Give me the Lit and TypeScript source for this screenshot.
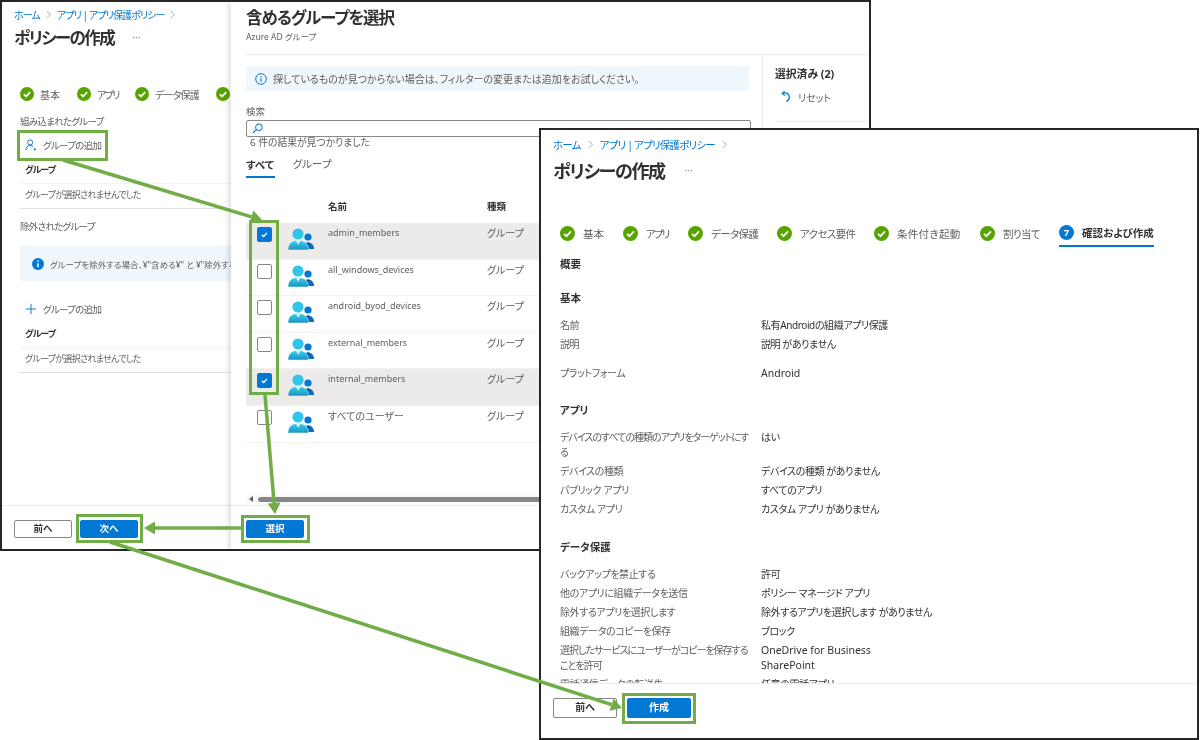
import { LitElement, css, html, svg } from 'lit';
import { customElement } from 'lit/decorators.js';

const chevron = html`<svg class="chev" viewBox="0 0 8 10"><path d="M2 1l4 4-4 4" fill="none" stroke="#a19f9d" stroke-width="1" /></svg>`;

const checkDot = html`<svg class="dot" viewBox="0 0 16 16">
  <circle cx="8" cy="8" r="8" fill="#57a300" />
  <path d="M4.3 8.3l2.6 2.5 4.8-5" fill="none" stroke="#fff" stroke-width="1.9" />
</svg>`;

const groupIcon = html`<svg class="group-icon" viewBox="0 0 26 22">
  <defs>
    <linearGradient id="gi" x1="0" y1="0" x2="0" y2="1">
      <stop offset="0" stop-color="#3ad0f2" />
      <stop offset="1" stop-color="#1a93bd" />
    </linearGradient>
  </defs>
  <circle cx="20" cy="9" r="3.6" fill="#0078d4" />
  <path d="M14 21c0-4 2.500-6.500 6-6.500s6 2.500 6 6.500z" fill="#0a6cc0" />
  <path d="M19 14.800h2.400l-1.200 3z" fill="#083f7a" />
  <circle cx="10" cy="6" r="5.600" fill="#32c5ea" />
  <path d="M0 22c0-6.500 3.500-9.500 10-9.500s10.500 3 10.500 9.500z" fill="url(#gi)" stroke="#fff" stroke-width=".5" />
  <path d="M8 12.800h4.400l-2.200 4z" fill="#e8f8fc" />
</svg>`;

const personIcon = html`<svg class="add-icon" viewBox="0 0 14 14">
  <circle cx="6" cy="4" r="3" fill="none" stroke="#0078d4" stroke-width="1.100" />
  <path d="M1 13c0-3.500 2-5.500 5-5.500 1.600 0 2.800.5 3.700 1.500" fill="none" stroke="#0078d4" stroke-width="1.100" />
  <circle cx="11.600" cy="12" r="1.300" fill="#0078d4" />
</svg>`;

const plusIcon = html`<svg class="add-icon" viewBox="0 0 14 14">
  <path d="M7 1v12M1 7h12" fill="none" stroke="#0078d4" stroke-width="1.100" />
</svg>`;

const solidInfo = html`<svg class="info-icon" viewBox="0 0 12 12">
  <circle cx="6" cy="6" r="6" fill="#0078d4" />
  <path d="M6 5.200v4M6 2.600v1.400" stroke="#fff" stroke-width="1.500" />
</svg>`;

const lineInfo = html`<svg class="info-icon" viewBox="0 0 12 12">
  <circle cx="6" cy="6" r="5.300" fill="none" stroke="#0078d4" stroke-width="1" />
  <path d="M6 5.200v3.600M6 3v1.200" stroke="#0078d4" stroke-width="1.100" />
</svg>`;

const searchIcon = html`<svg class="search-icon" viewBox="0 0 12 12">
  <circle cx="7.500" cy="4.500" r="3.500" fill="none" stroke="#0078d4" stroke-width="1.100" />
  <path d="M5 7l-4 4" stroke="#0078d4" stroke-width="1.300" />
</svg>`;

const resetIcon = html`<svg class="reset-icon" viewBox="0 0 12 14">
  <path d="M2 2.500c4-1.500 8 .5 8 4.500 0 2.500-1.500 4.500-3.500 5.500" fill="none" stroke="#0078d4" stroke-width="1.500" />
  <path d="M4.500 .5L1.500 2.600l3 2.600" fill="none" stroke="#0078d4" stroke-width="1.500" />
</svg>`;

const tick = html`<svg viewBox="0 0 15 15"><path d="M4.500 7.800l2 1.900 3.800-4" fill="none" stroke="#fff" stroke-width="1.600" /></svg>`;

const groups = [
  { name: 'admin_members', checked: true },
  { name: 'all_windows_devices', checked: false },
  { name: 'android_byod_devices', checked: false },
  { name: 'external_members', checked: false },
  { name: 'internal_members', checked: true },
  { name: 'すべてのユーザー', checked: false, jp: true },
];

// label, label width, letter spacing
const backSteps: [string, number, number][] = [
  ['基本', 20, 0],
  ['アプリ', 21, -1.6],
  ['データ保護', 44, -0.8],
  ['アクセス要件', 52, -0.8],
];

const frontSteps: [string, number, number][] = [
  ['基本', 21, 0],
  ['アプリ', 23, -1.9],
  ['データ保護', 47, -0.6],
  ['アクセス要件', 55, -0.6],
  ['条件付き起動', 64, 0.3],
  ['割り当て', 37, -0.6],
];

const boxes = [
  [18.5, 131.5, 88, 28],
  [250.5, 221.5, 27, 172],
  [77.5, 515.5, 64, 26],
  [242.5, 516.5, 66, 25],
  [623.5, 694.5, 71, 28],
];

const arrows = [
  [63, 160, 262, 220],
  [265, 395, 275, 514],
  [241, 528, 144, 528],
  [110, 542, 622, 708],
];

function arrowHead(x1: number, y1: number, x2: number, y2: number) {
  const a = Math.atan2(y2 - y1, x2 - x1);
  const len = 11;
  const w = 6.5;
  const bx = x2 - Math.cos(a) * len;
  const by = y2 - Math.sin(a) * len;
  const nx = -Math.sin(a) * w;
  const ny = Math.cos(a) * w;
  return {
    bx,
    by,
    points: `${x2},${y2} ${bx + nx},${by + ny} ${bx - nx},${by - ny}`,
  };
}

@customElement('app-root')
export class AppRoot extends LitElement {
  static styles = css`
    :host {
      display: block;
      width: 1200px;
      height: 740px;
      overflow: hidden;
      background: #fff;
      font-family: 'Noto Sans', 'Noto Sans CJK JP', sans-serif;
      font-feature-settings: 'palt';
      color: #323130;
    }

    .stage {
      position: relative;
      width: 1200px;
      height: 740px;
    }

    .win {
      position: absolute;
      box-sizing: border-box;
      background: #fff;
      border: 2px solid #262626;
      overflow: hidden;
      filter: blur(0.35px);
    }

    .win-back {
      left: 0;
      top: 0;
      width: 871px;
      height: 551px;
      display: flex;
      font-size: 10px;
    }

    .win-front {
      left: 539px;
      top: 128px;
      width: 660px;
      height: 612px;
      display: flex;
      flex-direction: column;
      font-size: 10px;
    }

    .overlay {
      position: absolute;
      left: 0;
      top: 0;
      pointer-events: none;
    }

    .crumb {
      display: flex;
      align-items: center;
      gap: 5px;
      height: 14px;
      margin: 5px 0 0 12px;
      color: #0078d4;
      letter-spacing: -0.9px;
      white-space: nowrap;
    }

    .chev {
      width: 7px;
      height: 9px;
    }

    .title {
      display: flex;
      align-items: center;
      height: 24px;
      margin: 4px 0 0 12px;
      font-size: 16.5px;
      font-weight: 700;
      letter-spacing: -1.5px;
      white-space: nowrap;
    }

    .more {
      margin-left: 18px;
      color: #8a8886;
      font-size: 10px;
      font-weight: 400;
      letter-spacing: 0;
    }

    .stepper {
      display: flex;
      align-items: center;
      gap: 17px;
      height: 16px;
      margin: 37px 0 0 18px;
      white-space: nowrap;
      color: #605e5c;
    }

    .step {
      display: flex;
      align-items: center;
      gap: 6px;
      flex: none;
    }

    .dot {
      width: 14px;
      height: 14px;
      flex: none;
    }

    /* left blade */
    .blade {
      width: 229px;
      flex: none;
      display: flex;
      flex-direction: column;
      overflow: hidden;
    }

    .blade-body {
      flex: 1;
      overflow: hidden;
    }

    .sec {
      height: 14px;
      line-height: 14px;
      margin: 13px 0 0 18px;
      font-size: 9.5px;
      letter-spacing: -0.7px;
      color: #605e5c;
      white-space: nowrap;
    }

    .sec.tight {
      margin-top: 11px;
    }

    .add {
      display: flex;
      align-items: center;
      gap: 6px;
      height: 20px;
      margin: 6px 0 0 23px;
      font-size: 9.5px;
      letter-spacing: -0.7px;
      color: #605e5c;
      white-space: nowrap;
    }

    .add.far {
      margin-top: 18px;
    }

    .add-icon {
      width: 12px;
      height: 12px;
      flex: none;
    }

    .mini-table {
      margin: 8px 0 0 18px;
    }

    .mini-head {
      box-sizing: border-box;
      height: 21px;
      padding: 0 0 0 5px;
      line-height: 14px;
      font-weight: 700;
      font-size: 9px;
      letter-spacing: -0.9px;
      border-bottom: 1px solid #f3f2f1;
    }

    .mini-row {
      box-sizing: border-box;
      height: 25px;
      padding: 4px 0 0 5px;
      line-height: 14px;
      font-size: 9px;
      letter-spacing: -0.7px;
      color: #605e5c;
      border-bottom: 1px solid #e1dfdd;
      white-space: nowrap;
    }

    .notice {
      display: flex;
      align-items: center;
      gap: 6px;
      height: 35px;
      margin: 12px 0 0 18px;
      padding-left: 12px;
      background: #eff6fc;
      font-size: 8.5px;
      color: #605e5c;
      white-space: nowrap;
      overflow: hidden;
    }

    .info-icon {
      width: 12px;
      height: 12px;
      flex: none;
    }

    .footer {
      box-sizing: border-box;
      height: 44px;
      flex: none;
      display: flex;
      gap: 8px;
      padding: 14px 0 0 12px;
      border-top: 1px solid #edebe9;
    }

    .btn {
      box-sizing: border-box;
      width: 58px;
      height: 18px;
      line-height: 15px;
      text-align: center;
      font-size: 9.5px;
      font-weight: 700;
      border-radius: 2px;
      border: 1px solid #8a8886;
      background: #fff;
      color: #323130;
    }

    .btn.primary {
      background: #0078d4;
      border-color: #0078d4;
      color: #fff;
    }

    /* group picker */
    .picker {
      flex: 1;
      min-width: 0;
      display: flex;
      flex-direction: column;
      box-shadow: -3px 0 5px rgba(0, 0, 0, 0.12);
      background: #fff;
      z-index: 1;
    }

    .picker .footer {
      padding-left: 15px;
    }

    .picker-head {
      box-sizing: border-box;
      height: 53px;
      flex: none;
      margin-left: 15px;
      padding-top: 4px;
      border-bottom: 1px solid #edebe9;
    }

    .picker-title {
      height: 24px;
      line-height: 24px;
      font-size: 16.5px;
      font-weight: 600;
      letter-spacing: -1.1px;
    }

    .picker-sub {
      height: 12px;
      line-height: 12px;
      margin-top: 1px;
      font-size: 8.5px;
      color: #605e5c;
    }

    .picker-body {
      flex: 1;
      min-height: 0;
      display: flex;
    }

    .picker-main {
      width: 531px;
      flex: none;
      display: flex;
      flex-direction: column;
      padding-left: 15px;
      box-sizing: border-box;
    }

    .hint {
      display: flex;
      align-items: center;
      gap: 6px;
      width: 503px;
      height: 25px;
      flex: none;
      box-sizing: border-box;
      margin-top: 11px;
      padding-left: 9px;
      background: #eff6fc;
      color: #605e5c;
      font-size: 10px;
      white-space: nowrap;
    }

    .field-label {
      height: 12px;
      line-height: 12px;
      margin-top: 15px;
      font-size: 9.5px;
      color: #605e5c;
    }

    .search {
      box-sizing: border-box;
      width: 505px;
      height: 17px;
      flex: none;
      margin-top: 2px;
      padding-left: 5px;
      display: flex;
      align-items: center;
      border: 1px solid #8a8886;
      border-radius: 2px;
    }

    .search-icon {
      width: 11px;
      height: 11px;
    }

    .count {
      height: 12px;
      line-height: 12px;
      padding-left: 4px;
      font-size: 9.8px;
      color: #605e5c;
    }

    .tabs {
      display: flex;
      gap: 18px;
      margin-top: 6px;
      height: 24px;
      flex: none;
      font-size: 10.5px;
      color: #605e5c;
    }

    .tab {
      box-sizing: border-box;
      height: 23px;
      line-height: 18px;
    }

    .tab.on {
      font-weight: 700;
      color: #323130;
      line-height: 20px;
      border-bottom: 2px solid #0078d4;
      padding-right: 1px;
    }

    .cols {
      display: grid;
      grid-template-columns: 82px 159px 1fr;
    }

    .thead {
      height: 14px;
      line-height: 14px;
      margin-top: 21px;
      font-size: 9.5px;
      font-weight: 700;
    }

    .rows {
      margin-top: 9px;
    }

    .row {
      box-sizing: border-box;
      height: 36.6px;
      line-height: 14px;
      padding-top: 3px;
      font-size: 9px;
      color: #605e5c;
      border-bottom: 1px solid #f3f2f1;
    }

    .row.sel {
      background: #edebe9;
    }

    .jp {
      font-size: 10px;
    }

    .cell-pick {
      display: flex;
      gap: 16px;
      padding: 2px 0 0 11px;
    }

    .cb {
      box-sizing: border-box;
      width: 15px;
      height: 15px;
      flex: none;
      margin-top: -1px;
      border: 1px solid #8a8886;
      border-radius: 2px;
      background: #fff;
    }

    .cb.on {
      background: #0078d4;
      border-color: #0078d4;
    }

    .cb svg {
      display: block;
      width: 13px;
      height: 13px;
    }

    .group-icon {
      width: 26px;
      height: 22px;
      flex: none;
    }

    .type {
      font-size: 10px;
    }

    .scroll {
      display: flex;
      align-items: center;
      gap: 5px;
      height: 8px;
      margin-top: auto;
      margin-bottom: 2px;
      padding-left: 3px;
      background: #f8f8f8;
    }

    .scroll-arrow {
      width: 0;
      height: 0;
      border: 3px solid transparent;
      border-right: 4px solid #605e5c;
      border-left: 0;
    }

    .scroll-thumb {
      flex: 1;
      height: 5px;
      border-radius: 3px;
      background: #8a8886;
    }

    .picker-side {
      flex: 1;
      min-width: 0;
      padding-left: 12px;
      border-left: 1px solid #edebe9;
    }

    .side-title {
      height: 14px;
      line-height: 14px;
      margin-top: 12px;
      font-size: 10.8px;
      font-weight: 700;
      white-space: nowrap;
    }

    .side-reset {
      display: flex;
      align-items: center;
      gap: 7px;
      height: 14px;
      margin: 9px 0 0 6px;
      color: #605e5c;
      white-space: nowrap;
    }

    .reset-icon {
      width: 10px;
      height: 12px;
    }

    .side-line {
      margin-top: 17px;
      border-bottom: 1px solid #edebe9;
    }

    /* front window */
    .win-front .crumb {
      height: 16px;
      margin: 6px 0 0 12px;
      gap: 6px;
      font-size: 10.5px;
      letter-spacing: -0.8px;
    }

    .win-front .title {
      height: 28px;
      font-size: 18px;
      letter-spacing: -1.3px;
    }

    .win-front .more {
      margin-left: 20px;
    }

    .win-front .stepper {
      height: 27px;
      margin: 37px 0 0 19px;
      gap: 19px;
      font-size: 10.5px;
      align-items: flex-start;
    }

    .win-front .step {
      height: 25px;
      gap: 8px;
      box-sizing: border-box;
      padding-bottom: 1px;
    }

    .win-front .dot {
      width: 15px;
      height: 15px;
    }

    .win-front .step.now {
      color: #323130;
      font-weight: 700;
      border-bottom: 2px solid #0078d4;
      height: 26px;
      padding-bottom: 2px;
    }

    .review {
      flex: 1;
      min-height: 0;
      overflow: hidden;
      padding-left: 19px;
    }

    .head {
      height: 16px;
      line-height: 16px;
      font-size: 10.5px;
      font-weight: 700;
    }

    .head.first {
      margin-top: 8px;
    }

    .head.next {
      margin-top: 18px;
    }

    .head.mid {
      margin-top: 19px;
    }

    .head.far {
      margin-top: 20px;
    }

    .rows-block {
      margin-top: 10px;
    }

    .kv {
      display: grid;
      grid-template-columns: 201px 1fr;
      line-height: 15px;
      padding: 2px 0;
      letter-spacing: -0.4px;
      color: #323130;
      white-space: nowrap;
    }

    .kv.spaced {
      margin-top: 10px;
    }

    .kv > span:first-child {
      color: #605e5c;
    }

    .kv .tight {
      letter-spacing: -1px;
    }

    .kv .lat {
      font-size: 10.5px;
      letter-spacing: 0;
    }

    .win-front .footer {
      height: 55px;
      gap: 10px;
      padding: 14px 0 0 12px;
    }

    .win-front .btn {
      width: 64px;
      height: 20px;
      line-height: 17px;
      font-size: 10px;
    }
  `;

  private renderSteps(items: [string, number, number][]) {
    return items.map(
      ([label, w, ls]) => html`
        <div class="step">${checkDot}<span style="width:${w}px;letter-spacing:${ls}px">${label}</span></div>
      `,
    );
  }

  private renderBack() {
    return html`
      <div class="win win-back">
        <div class="blade">
          <div class="blade-body">
            <div class="crumb"><span>ホーム</span>${chevron}<span>アプリ | アプリ保護ポリシー</span>${chevron}</div>
            <div class="title">ポリシーの作成<span class="more">···</span></div>
            <div class="stepper">${this.renderSteps(backSteps)}</div>
            <div class="sec">組み込まれたグループ</div>
            <div class="add">${personIcon}<span>グループの追加</span></div>
            <div class="mini-table">
              <div class="mini-head">グループ</div>
              <div class="mini-row">グループが選択されませんでした</div>
            </div>
            <div class="sec tight">除外されたグループ</div>
            <div class="notice">${solidInfo}<span>グループを除外する場合、¥"含める¥" と ¥"除外する¥" の両方</span></div>
            <div class="add far">${plusIcon}<span>グループの追加</span></div>
            <div class="mini-table">
              <div class="mini-head">グループ</div>
              <div class="mini-row">グループが選択されませんでした</div>
            </div>
          </div>
          <div class="footer">
            <div class="btn">前へ</div>
            <div class="btn primary">次へ</div>
          </div>
        </div>
        <div class="picker">
          <div class="picker-head">
            <div class="picker-title">含めるグループを選択</div>
            <div class="picker-sub">Azure AD グループ</div>
          </div>
          <div class="picker-body">
            <div class="picker-main">
              <div class="hint">${lineInfo}<span>探しているものが見つからない場合は、フィルターの変更または追加をお試しください。</span></div>
              <div class="field-label">検索</div>
              <div class="search">${searchIcon}</div>
              <div class="count">6 件の結果が見つかりました</div>
              <div class="tabs">
                <div class="tab on">すべて</div>
                <div class="tab">グループ</div>
              </div>
              <div class="cols thead"><span></span><span>名前</span><span>種類</span></div>
              <div class="rows">
                ${groups.map(
                  (g) => html`
                    <div class="cols row ${g.checked ? 'sel' : ''}">
                      <div class="cell-pick">
                        <div class="cb ${g.checked ? 'on' : ''}">${g.checked ? tick : ''}</div>
                        ${groupIcon}
                      </div>
                      <span class=${g.jp ? 'jp' : ''}>${g.name}</span>
                      <span class="type">グループ</span>
                    </div>
                  `,
                )}
              </div>
              <div class="scroll"><div class="scroll-arrow"></div><div class="scroll-thumb"></div></div>
            </div>
            <div class="picker-side">
              <div class="side-title">選択済み (2)</div>
              <div class="side-reset">${resetIcon}<span>リセット</span></div>
              <div class="side-line"></div>
            </div>
          </div>
          <div class="footer">
            <div class="btn primary">選択</div>
          </div>
        </div>
      </div>
    `;
  }

  private renderFront() {
    return html`
      <div class="win win-front">
        <div class="crumb"><span>ホーム</span>${chevron}<span>アプリ | アプリ保護ポリシー</span>${chevron}</div>
        <div class="title">ポリシーの作成<span class="more">···</span></div>
        <div class="stepper">
          ${this.renderSteps(frontSteps)}
          <div class="step now">
            <svg class="dot" viewBox="0 0 16 16">
              <circle cx="8" cy="8" r="8" fill="#0078d4" />
              <text x="8" y="11.500" text-anchor="middle" font-size="10" font-weight="700" fill="#fff">7</text>
            </svg>
            <span>確認および作成</span>
          </div>
        </div>
        <div class="review">
          <div class="head first">概要</div>
          <div class="head next">基本</div>
          <div class="rows-block">
            <div class="kv"><span>名前</span><span>私有Androidの組織アプリ保護</span></div>
            <div class="kv"><span>説明</span><span>説明 がありません</span></div>
            <div class="kv spaced"><span>プラットフォーム</span><span class="lat">Android</span></div>
          </div>
          <div class="head mid">アプリ</div>
          <div class="rows-block">
            <div class="kv"><span class="tight">デバイスのすべての種類のアプリをターゲットにす<br />る</span><span>はい</span></div>
            <div class="kv"><span>デバイスの種類</span><span>デバイスの種類 がありません</span></div>
            <div class="kv"><span>パブリック アプリ</span><span>すべてのアプリ</span></div>
            <div class="kv"><span>カスタム アプリ</span><span>カスタム アプリ がありません</span></div>
          </div>
          <div class="head far">データ保護</div>
          <div class="rows-block">
            <div class="kv"><span>バックアップを禁止する</span><span>許可</span></div>
            <div class="kv"><span>他のアプリに組織データを送信</span><span>ポリシー マネージド アプリ</span></div>
            <div class="kv"><span>除外するアプリを選択します</span><span>除外するアプリを選択します がありません</span></div>
            <div class="kv"><span>組織データのコピーを保存</span><span>ブロック</span></div>
            <div class="kv">
              <span class="tight">選択したサービスにユーザーがコピーを保存する<br />ことを許可</span>
              <span class="lat">OneDrive for Business<br />SharePoint</span>
            </div>
            <div class="kv"><span>電話通信データの転送先</span><span>任意の電話アプリ</span></div>
          </div>
        </div>
        <div class="footer">
          <div class="btn">前へ</div>
          <div class="btn primary">作成</div>
        </div>
      </div>
    `;
  }

  private renderOverlay() {
    return html`
      <svg class="overlay" width="1200" height="740" viewBox="0 0 1200 740">
        ${boxes.map(
          ([x, y, w, h]) => svg`<rect x=${x} y=${y} width=${w} height=${h} fill="none" stroke="#70ad47" stroke-width="3" />`,
        )}
        ${arrows.map(([x1, y1, x2, y2]) => {
          const head = arrowHead(x1, y1, x2, y2);
          return svg`
            <line x1=${x1} y1=${y1} x2=${head.bx} y2=${head.by} stroke="#70ad47" stroke-width="3.500" />
            <polygon points=${head.points} fill="#70ad47" />
          `;
        })}
      </svg>
    `;
  }

  protected render() {
    return html`
      <div class="stage">
        ${this.renderBack()} ${this.renderFront()} ${this.renderOverlay()}
      </div>
    `;
  }
}
